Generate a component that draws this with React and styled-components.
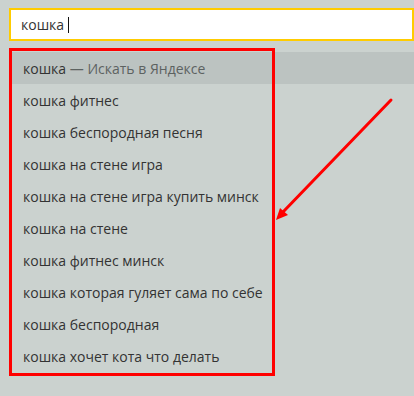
import React from "react";
import styled, { createGlobalStyle } from "styled-components";

const Global = createGlobalStyle`
  html, body {
    margin: 0;
    padding: 0;
    background: #cbd2cf;
    overflow: hidden;
  }
`;

const Page = styled.div`
  position: relative;
  width: 414px;
  height: 396px;
  padding: 8px 0 0 9px;
  box-sizing: border-box;
  font-family: "Open Sans", "Noto Sans", sans-serif;
`;

const SearchBox = styled.div`
  height: 33px;
  box-sizing: border-box;
  border: 2px solid #ffcc00;
  background: #fff;
  display: flex;
  align-items: center;
  padding-left: 10px;
  font-size: 14px;
  color: #333;
`;

const Caret = styled.span`
  display: inline-block;
  width: 1px;
  height: 16px;
  background: #111;
  margin-left: 4px;
`;

const Suggest = styled.ul`
  list-style: none;
  margin: 7px 0 0;
  padding: 4px 0 0;
`;

const Item = styled.li`
  height: 32px;
  display: flex;
  align-items: center;
  padding-left: 14px;
  font-size: 14px;
  color: #333;
  background: ${(p) => (p.$active ? "#bcc3c1" : "transparent")};
`;

const Hint = styled.span`
  color: #5c6261;
  white-space: pre;
`;

const Frame = styled.div`
  position: absolute;
  left: 9px;
  top: 48px;
  width: 266px;
  height: 328px;
  box-sizing: border-box;
  border: 3px solid #ff0000;
  pointer-events: none;
`;

const Arrow = styled.svg`
  position: absolute;
  left: 0;
  top: 0;
  pointer-events: none;
`;

const items = [
  "кошка фитнес",
  "кошка беспородная песня",
  "кошка на стене игра",
  "кошка на стене игра купить минск",
  "кошка на стене",
  "кошка фитнес минск",
  "кошка которая гуляет сама по себе",
  "кошка беспородная",
  "кошка хочет кота что делать",
];

export default function App() {
  return (
    <Page>
      <Global />
      <SearchBox>
        кошка
        <Caret />
      </SearchBox>
      <Suggest>
        <Item $active>
          кошка<Hint> — Искать в Яндексе</Hint>
        </Item>
        {items.map((t) => (
          <Item key={t}>{t}</Item>
        ))}
      </Suggest>
      <Frame />
      <Arrow width="414" height="396">
        <line x1="391" y1="100" x2="283" y2="212" stroke="#ff0000" strokeWidth="3" strokeLinecap="round" />
        <polygon points="276,220 280,208 288,215" fill="#ff0000" />
      </Arrow>
    </Page>
  );
}
